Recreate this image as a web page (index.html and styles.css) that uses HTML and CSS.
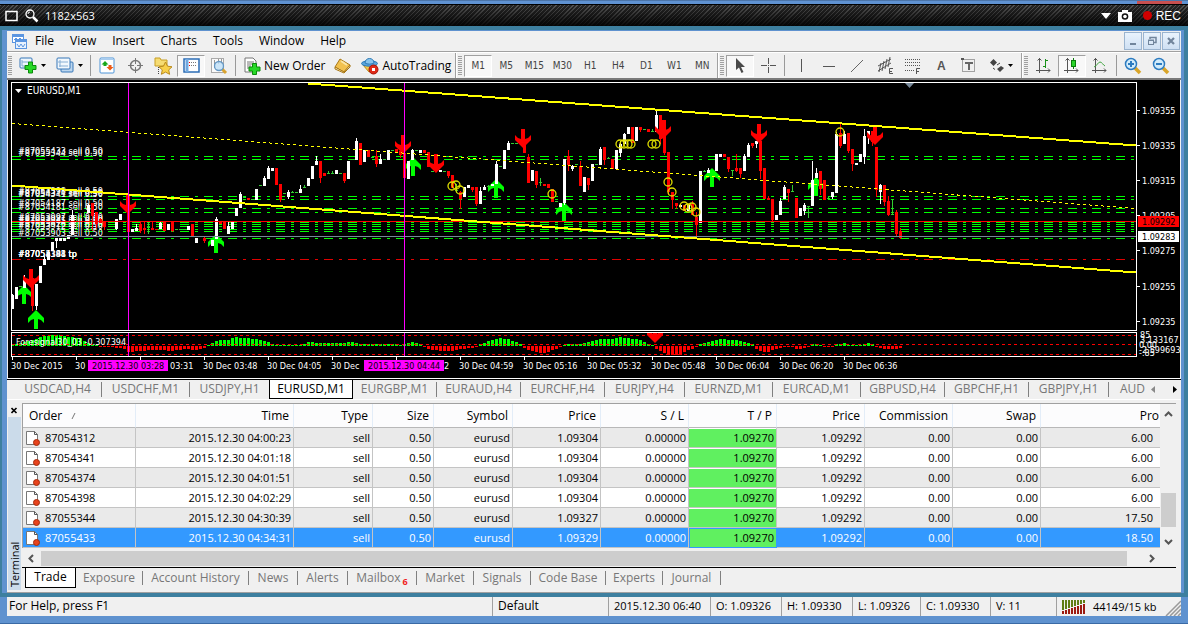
FILE: index.html
```html
<!DOCTYPE html>
<html lang="en">
<head>
    <meta charset="UTF-8">
    <meta name="viewport" content="width=device-width, initial-scale=1.0">
    <title>EURUSD,M1</title>
    <link rel="stylesheet" href="styles.css">
</head>
<body>
    <div class="top-edge"><span class="top-edge-red"></span></div>
    <header class="recorder">
        <svg width="14" height="12" viewBox="0 0 14 12"><rect x="1" y="1.5" width="11" height="9" fill="none" stroke="#fff" stroke-width="1.5"/></svg>
        <svg width="14" height="14" viewBox="0 0 14 14" fill="none" stroke="#fff"><circle cx="5" cy="5" r="4" stroke-width="1.3"/><path d="M3 5a2 2 0 0 1 2-2"/><path d="M8 8l4.500 4.500" stroke-width="2.500"/></svg>
        <span class="recorder-size">1182x563</span>
        <svg width="12" height="8" viewBox="0 0 12 8"><path d="M1 1h10L6 7z" fill="#fff"/></svg>
        <svg width="14" height="12" viewBox="0 0 14 12"><path d="M0 2h4V0h6v2h4v10H0z" fill="#fff"/><circle cx="7" cy="6.500" r="3.300" fill="#111"/><circle cx="7" cy="6.500" r="1.800" fill="#fff"/></svg>
        <span class="rec"><span class="rec-dot"></span>REC</span>
    </header>

    <div class="frame">
        <nav class="menu">
            <svg class="menu-logo" width="15" height="15" viewBox="0 0 15 15"><rect x=".5" y=".5" width="11" height="8" fill="#fff" stroke="#5b95e0"/><path d="M0 2h12" stroke="#5b95e0" stroke-width="2"/><path d="M2 6l2-2 2 2 2-2 2 2" fill="none" stroke="#5b95e0"/><rect x="3.500" y="5.500" width="11" height="9" fill="#e9f2fd" stroke="#5b95e0"/><path d="M3 7h12" stroke="#5b95e0" stroke-width="2"/><path d="M5 10l2 3 2-3 2 3 2-3" fill="none" stroke="#5b95e0"/></svg>
            <a href="#">File</a>
            <a href="#">View</a>
            <a href="#">Insert</a>
            <a href="#">Charts</a>
            <a href="#">Tools</a>
            <a href="#">Window</a>
            <a href="#">Help</a>
            <div class="mdi-buttons">
                <button aria-label="Minimize"><svg width="12" height="12" viewBox="0 0 12 12"><path d="M3 9h6" stroke="#71859c" stroke-width="2"/></svg></button>
                <button aria-label="Restore"><svg width="12" height="12" viewBox="0 0 12 12" fill="none" stroke="#71859c"><path d="M4 4V2.500h6v5H8" stroke-width="1.500"/><rect x="2.500" y="5.500" width="5" height="4"/><path d="M2 5h6"/></svg></button>
                <button aria-label="Close"><svg width="12" height="12" viewBox="0 0 12 12"><path d="M3 3l6 6M9 3L3 9" stroke="#71859c" stroke-width="2.200"/></svg></button>
            </div>
        </nav>

        <div class="toolbar">
            <span class="grip"></span>
            <button class="tool tool-drop" aria-label="New chart"><svg width="18" height="17" viewBox="0 0 18 17"><rect x="1" y="1" width="12" height="10" rx="1" fill="#eef6fc" stroke="#3677b8"/><path d="M3 3v6h7M3 5h7" fill="none" stroke="#7fa9d0"/><path d="M9.500 5h4v3.500H17v4h-3.500V16h-4v-3.500H6v-4h3.500z" fill="#27d827" stroke="#0b8a0b"/></svg><svg width="6" height="4" viewBox="0 0 6 4"><path d="M0 0h5L2.500 3z"/></svg></button>
            <button class="tool tool-drop" aria-label="Profiles"><svg width="18" height="17" viewBox="0 0 18 17"><rect x="5" y="5" width="12" height="10" rx="1" fill="#bcd6ee" stroke="#3677b8"/><rect x="1" y="1" width="13" height="11" rx="1" fill="#f2f8fd" stroke="#3677b8"/><path d="M4 3v7M2 5h10M3 9h9" fill="none" stroke="#88afd4"/></svg><svg width="6" height="4" viewBox="0 0 6 4"><path d="M0 0h5L2.500 3z"/></svg></button>
            <span class="sep"></span>
            <button class="tool" aria-label="Market Watch"><svg width="17" height="17" viewBox="0 0 17 17"><rect x="1" y="1" width="14" height="15" rx="1" fill="#fff" stroke="#4d94d8"/><path d="M2 2h12" stroke="#a9cdef" stroke-width="2"/><path d="M6 4l3.500 3.500H7.500V9h-3V7.500h-2z" fill="#17a717"/><path d="M11 13.500L7.500 10h2V8h3v2h2z" fill="#ee5a16"/></svg></button>
            <button class="tool" aria-label="Data Window"><svg width="17" height="17" viewBox="0 0 17 17" fill="none" stroke="#777"><circle cx="8.500" cy="8.500" r="5" stroke-width="1.500"/><path d="M8.500 1v6M8.500 10v6M1 8.500h6M10 8.500h6"/></svg></button>
            <button class="tool" aria-label="Navigator"><svg width="19" height="18" viewBox="0 0 19 18"><path d="M1 3V1h5l1 2h6v6H1z" fill="#f6dc73" stroke="#c79e24"/><path d="M4.500 10v7" stroke="#444" stroke-dasharray="1 1"/><path d="M11.500 5l2 4.200 4.500.6-3.300 3.100.9 4.400-4.100-2.200-4.100 2.200.9-4.400L5 9.800l4.500-.6z" fill="#f8d04a" stroke="#b98a1c"/></svg></button>
            <button class="tool pressed" aria-label="Terminal"><svg width="17" height="15" viewBox="0 0 17 15"><rect x="1" y="1" width="15" height="13" fill="#fff" stroke="#2b6cb5" stroke-width="1.500"/><path d="M4 1v13" stroke="#70a8e0" stroke-width="3"/><path d="M8 4.500h6M8 7.500h6" stroke="#777" stroke-dasharray="1 1"/><path d="M6 4.500h1" stroke="red"/><path d="M6 7.500h1" stroke="red"/></svg></button>
            <button class="tool" aria-label="Strategy Tester"><svg width="18" height="18" viewBox="0 0 18 18"><rect x="1.500" y="1.500" width="12" height="14" fill="#fafafa" stroke="#aaa"/><path d="M4.500 3v8M8.500 2v5M11.500 2v5" stroke="#999"/><path d="M12 12l4 4" stroke="#d9a32f" stroke-width="3"/><circle cx="9" cy="9" r="4.500" fill="#bfe0f8" fill-opacity=".8" stroke="#6497c4" stroke-width="1.300"/></svg></button>
            <span class="sep"></span>
            <button class="tool-text"><svg width="18" height="18" viewBox="0 0 18 18"><path d="M2 1h8l3 3v11H2z" fill="#fff" stroke="#777"/><path d="M4 5h7M4 7h7M4 9h4M4 11h3" stroke="#777"/><path d="M9.500 6.500h4V10H17v4h-3.500v3.500h-4V14H6v-4h3.500z" fill="#27d827" stroke="#0b8a0b"/></svg>New Order</button>
            <button class="tool" aria-label="MetaEditor"><svg width="17" height="16" viewBox="0 0 17 16"><path d="M6 1l10 6-6 7L1 9z" fill="#f2c14e" stroke="#a87716"/><path d="M1 9v2l9 4 6-6V7l-6 7z" fill="#fff1c0" stroke="#a87716"/><path d="M7 3l6 4" stroke="#fbe6a4" stroke-width="2"/></svg></button>
            <button class="tool-text"><svg width="18" height="18" viewBox="0 0 18 18"><path d="M2 8l6 7 8-2-1-5z" fill="#f5c945" stroke="#b98d20"/><ellipse cx="8.500" cy="6.500" rx="8" ry="2.700" fill="#5aa5dc" stroke="#2c79b5"/><path d="M4 6c0-6 9-6 9 0-2 1.500-7 1.500-9 0z" fill="#88c4ec" stroke="#2c79b5"/><circle cx="12.500" cy="12.500" r="4.500" fill="#e02a18" stroke="#a91305"/><rect x="11" y="11" width="3" height="3" fill="#fff"/></svg>AutoTrading</button>

            <span class="group-end"></span>
            <span class="grip"></span>
            <button class="tool period pressed">M1</button>
            <button class="tool period">M5</button>
            <button class="tool period">M15</button>
            <button class="tool period">M30</button>
            <button class="tool period">H1</button>
            <button class="tool period">H4</button>
            <button class="tool period">D1</button>
            <button class="tool period">W1</button>
            <button class="tool period">MN</button>

            <span class="group-end"></span>
            <span class="grip"></span>
            <button class="tool pressed" aria-label="Cursor"><svg width="10" height="16" viewBox="0 0 10 16"><path d="M1 0v12l3-2.500L6.500 15l2-1L6 9h4z" fill="#4a4a4a"/></svg></button>
            <button class="tool" aria-label="Crosshair"><svg width="15" height="15" viewBox="0 0 15 15"><path d="M7.500 0v6M7.500 9v6M0 7.500h6M9 7.500h6M7 7.500h1" stroke="#555"/></svg></button>
            <span class="sep"></span>
            <button class="tool" aria-label="Vertical line"><svg width="14" height="14" viewBox="0 0 14 14"><path d="M7.500 0v13" stroke="#555"/></svg></button>
            <button class="tool" aria-label="Horizontal line"><svg width="14" height="14" viewBox="0 0 14 14"><path d="M1 7.500h12" stroke="#555"/></svg></button>
            <button class="tool" aria-label="Trendline"><svg width="14" height="14" viewBox="0 0 14 14"><path d="M1 13L13 1" stroke="#666"/></svg></button>
            <button class="tool" aria-label="Equidistant channel"><svg width="17" height="18" viewBox="0 0 17 18" fill="none" stroke="#555"><path d="M1 9L14 2M1 14l13-8M4 6L2 15M7 4L5 14M10 2L8 12M13 0l-2 10"/><path d="M16 11.500h-3.500v5H16M12 14.500h3"/></svg></button>
            <button class="tool" aria-label="Fibonacci"><svg width="16" height="18" viewBox="0 0 16 18" fill="none" stroke="#555"><path d="M0 2.500h15M0 5.500h15M0 8.500h15M0 13.500h9" stroke-dasharray="1 1"/><path d="M15 11.500h-3.500V17M11 14.500h3"/></svg></button>
            <button class="tool letter">A</button>
            <button class="tool" aria-label="Text label"><svg width="16" height="16" viewBox="0 0 16 16"><path d="M1.500 1.500h12v12h-12z" fill="none" stroke="#555" stroke-dasharray="1 1"/><path d="M0 0h3v2H0z" fill="#555"/><path d="M4 5h8M8 4v8" stroke="#666" stroke-width="2"/></svg></button>
            <button class="tool tool-drop" aria-label="Arrows"><svg width="14" height="14" viewBox="0 0 14 14"><path d="M3.500 0L7 3.500 3.500 7 0 3.500zM11 7l3 2-4 4-3-3z" fill="#444"/><path d="M3 9l2 1.500M7 6l3-2" stroke="#444"/></svg><svg width="6" height="4" viewBox="0 0 6 4"><path d="M0 0h5L2.500 3z"/></svg></button>

            <span class="group-end"></span>
            <span class="grip"></span>
            <button class="tool" aria-label="Bar chart"><svg width="16" height="16" viewBox="0 0 16 16" fill="none"><path d="M3.500 0v15M0 12.500h14M1.500 2.500l2-2 2 2M12 10.500l2 2-2 2" stroke="#555"/><path d="M9.500 1v9M9 2.500h3M7 8.500h3" stroke="#189018"/></svg></button>
            <button class="tool pressed" aria-label="Candlesticks"><svg width="16" height="16" viewBox="0 0 16 16" fill="none"><path d="M3.500 0v15M0 12.500h14M1.500 2.500l2-2 2 2M12 10.500l2 2-2 2" stroke="#555"/><path d="M9.500 0v11" stroke="#0b7d0b"/><rect x="7.500" y="2.500" width="4" height="6" fill="#2ad52a" stroke="#0b7d0b"/></svg></button>
            <button class="tool" aria-label="Line chart"><svg width="16" height="16" viewBox="0 0 16 16" fill="none"><path d="M3.500 0v15M0 12.500h14M1.500 2.500l2-2 2 2M12 10.500l2 2-2 2" stroke="#555"/><path d="M2 9c3-1 4-5 6-5s3 3 5 4" stroke="#3fa53f"/></svg></button>
            <span class="sep"></span>
            <button class="tool" aria-label="Zoom in"><svg width="18" height="18" viewBox="0 0 18 18"><path d="M11 11l5 5" stroke="#d9a52a" stroke-width="3.500"/><circle cx="7" cy="7" r="5.500" fill="#d2ecfb" stroke="#2e7cc0" stroke-width="1.500"/><path d="M4 7h6M7 4v6" stroke="#2e7cc0" stroke-width="2"/></svg></button>
            <button class="tool" aria-label="Zoom out"><svg width="18" height="18" viewBox="0 0 18 18"><path d="M11 11l5 5" stroke="#d9a52a" stroke-width="3.500"/><circle cx="7" cy="7" r="5.500" fill="#d2ecfb" stroke="#2e7cc0" stroke-width="1.500"/><path d="M4 7h6" stroke="#2e7cc0" stroke-width="2"/></svg></button>
        </div>

        <main class="chart">
            <svg id="chart" viewBox="8 2 1172 298"></svg>
        </main>

        <nav class="chart-tabs">
            <a href="#">USDCAD,H4</a>
            <a href="#">USDCHF,M1</a>
            <a href="#" class="before-active">USDJPY,H1</a>
            <a href="#" class="active">EURUSD,M1</a>
            <a href="#">EURGBP,M1</a>
            <a href="#">EURAUD,H4</a>
            <a href="#">EURCHF,H4</a>
            <a href="#">EURJPY,H4</a>
            <a href="#">EURNZD,M1</a>
            <a href="#">EURCAD,M1</a>
            <a href="#">GBPUSD,H4</a>
            <a href="#">GBPCHF,H1</a>
            <a href="#">GBPJPY,H1</a>
            <a href="#" class="cut">AUD</a>
            <button aria-label="Previous"><svg width="4" height="8" viewBox="0 0 4 8"><path d="M4 0v7L0 3.500z" fill="#888"/></svg></button>
            <button aria-label="Next"><svg width="4" height="8" viewBox="0 0 4 8"><path d="M0 0v7l4-3.500z"/></svg></button>
        </nav>

        <section class="terminal">
            <div class="terminal-side">
                <button aria-label="Close"><svg width="7" height="7" viewBox="0 0 7 7"><path d="M.5 1l5 5M5.500 1l-5 5" stroke="#000" stroke-width="1.600"/></svg></button>
                <span class="terminal-title">Terminal</span>
            </div>
            <div class="terminal-body">
                <div class="orders">
                    <table>
                        <colgroup>
                            <col class="c-order"><col class="c-time"><col class="c-type"><col class="c-size"><col class="c-type">
                            <col class="c-num"><col class="c-num"><col class="c-num"><col class="c-num"><col class="c-num"><col class="c-num"><col>
                        </colgroup>
                        <thead>
                            <tr><th>Order <svg width="8" height="8" viewBox="0 0 8 8"><path d="M1 7L4 1" stroke="#777"/></svg></th><th>Time</th><th>Type</th><th>Size</th><th>Symbol</th><th>Price</th><th>S / L</th><th>T / P</th><th>Price</th><th>Commission</th><th>Swap</th><th>Pro</th></tr>
                        </thead>
                        <tbody id="orders"></tbody>
                    </table>
                    <div class="v-scroll">
                        <svg width="9" height="6" viewBox="0 0 9 6"><path d="M1 5l3.500-3.500L8 5" fill="none" stroke="#555" stroke-width="2"/></svg>
                        <span class="v-thumb"></span>
                        <svg width="9" height="6" viewBox="0 0 9 6"><path d="M1 1l3.500 3.500L8 1" fill="none" stroke="#555" stroke-width="2"/></svg>
                    </div>
                </div>
                <div class="h-scroll">
                    <svg width="6" height="9" viewBox="0 0 6 9"><path d="M5 1L1.500 4.500 5 8" fill="none" stroke="#555" stroke-width="2"/></svg>
                    <span class="h-thumb"></span>
                    <svg width="6" height="9" viewBox="0 0 6 9"><path d="M1 1l3.500 3.500L1 8" fill="none" stroke="#555" stroke-width="2"/></svg>
                </div>
                <nav class="terminal-tabs">
                    <a href="#" class="active">Trade</a>
                    <a href="#">Exposure</a>
                    <a href="#">Account History</a>
                    <a href="#">News</a>
                    <a href="#">Alerts</a>
                    <a href="#">Mailbox<small>6</small></a>
                    <a href="#">Market</a>
                    <a href="#">Signals</a>
                    <a href="#">Code Base</a>
                    <a href="#">Experts</a>
                    <a href="#">Journal</a>
                </nav>
            </div>
        </section>
    </div>

    <div class="bottom-edge">
        <footer class="status">
            <span>For Help, press F1</span>
            <span>Default</span>
            <span class="num">2015.12.30 06:40</span>
            <span class="num">O: 1.09326</span>
            <span class="num">H: 1.09330</span>
            <span class="num">L: 1.09326</span>
            <span class="num">C: 1.09330</span>
            <span class="num">V: 11</span>
            <span class="num traffic">
                <svg width="24" height="14" viewBox="0 0 24 14"><path d="M1 0v10M4 0v9M7 0v8M10 0v7M13 0v6M16 0v5M19 0v4M22 0v3" stroke="#5f7d13" stroke-width="2"/><path d="M1 11v3M4 10v4M7 9v5M10 8v6M13 7v7M16 6v8M19 5v9M22 4v10" stroke="#9c1a10" stroke-width="2"/></svg>
                44149/15 kb
            </span>
            <svg class="resize" width="16" height="16" viewBox="0 0 16 16"><path d="M1 16L16 1M5 16L16 5M9 16l7-7M13 16l3-3" stroke="#999" stroke-width="1.500"/></svg>
        </footer>
    </div>

    <script src="script.js"></script>
</body>
</html>
```

FILE: styles.css
```css
* {
    box-sizing: border-box;
}
body {
    margin: 0;
    min-height: 100vh;
    background: #3d7f9f;
    font-family: "Open Sans", "Noto Sans", sans-serif;
    font-size: 12px;
    line-height: 16px;
    color: #000;
}
a {
    color: inherit;
    text-decoration: none;
}
button {
    margin: 0;
    padding: 0;
    border: 0;
    background: none;
    font: inherit;
    color: inherit;
}
svg {
    flex: none;
}

/* screen recorder strip */
.top-edge {
    display: flex;
    justify-content: flex-end;
    height: 4px;
    padding-right: 6px;
    background: #5f92d2;
    border-top: 1px solid #4b74a8;
}
.top-edge-red {
    width: 45px;
    background: #c75050;
}
.recorder {
    display: flex;
    align-items: center;
    gap: 6px;
    height: 22px;
    margin-bottom: 4px;
    padding: 0 7px 0 5px;
    border-top: 1px solid #000;
    color: #fff;
    background:
        linear-gradient(rgba(0, 0, 0, 0), rgba(0, 0, 0, 0.9)),
        repeating-linear-gradient(135deg, #555 0, #555 1px, #262626 1px, #262626 3px);
}
.recorder-size {
    flex: 1;
    font-size: 11px;
}
.rec {
    display: flex;
    align-items: center;
    gap: 4px;
    margin-left: 5px;
    font-family: "Liberation Sans", sans-serif;
    font-size: 12px;
}
.rec-dot {
    width: 9px;
    height: 9px;
    border-radius: 50%;
    background: #d00000;
}

/* main window */
.frame {
    margin: 0 4px 4px 2px;
    border: solid #5f92cf;
    border-width: 1px 3px 0 5px;
    background: #f0f0f0;
}
.menu {
    display: flex;
    align-items: center;
    gap: 16px;
    height: 21px;
    padding-left: 5px;
    border-bottom: 1px solid #a0a0a0;
}
.menu-logo {
    margin-right: -8px;
}
.mdi-buttons {
    display: flex;
    gap: 1px;
    margin-left: auto;
    padding-right: 1px;
}
.mdi-buttons button {
    display: flex;
    align-items: center;
    justify-content: center;
    width: 18px;
    height: 18px;
    border: 1px solid #9bb4cf;
    background: linear-gradient(#e9f3fd, #cfe0f3);
}
.toolbar {
    display: flex;
    align-items: center;
    height: 28px;
    border-top: 1px solid #fff;
    border-bottom: 2px solid #7a7a7a;
}
.grip {
    width: 4px;
    height: 19px;
    margin: 0 2px 0 1px;
    background: repeating-linear-gradient(#a0a0a0 0, #a0a0a0 1px, #f0f0f0 1px, #f0f0f0 2px);
}
.tool {
    display: flex;
    align-items: center;
    justify-content: center;
    width: 28px;
    height: 22px;
}
.tool-drop {
    gap: 4px;
    width: 37px;
}
.tool-text {
    display: flex;
    align-items: center;
    gap: 3px;
    padding: 0 3px 0 5px;
    white-space: nowrap;
}
.pressed {
    border: 1px solid #fff;
    border-top-color: #a0a0a0;
    border-left-color: #a0a0a0;
    background: #f8f8f8;
}
.sep {
    width: 1px;
    height: 21px;
    margin: 0 2px;
    background: #999;
}
.group-end {
    width: 2px;
    height: 25px;
    margin-left: 1px;
    border-left: 1px solid #a0a0a0;
    background: #fff;
}
.period {
    font-family: "DejaVu Sans Condensed", "DejaVu Sans", sans-serif;
    font-size: 10px;
    color: #444;
}
.letter {
    font-family: "Liberation Sans", sans-serif;
    font-weight: bold;
    color: #555;
}

/* chart */
.chart {
    margin: 0 1px;
    background: #000;
    border-bottom: 1px solid #fff;
}
.chart svg {
    display: block;
    width: 100%;
    font-family: "DejaVu Sans Condensed", "DejaVu Sans", sans-serif;
    font-size: 9px;
}
.chart-tabs {
    display: grid;
    grid-template-columns: 88px 88px 79px 84px 84px 84px 84px 80px 88px 88px 84px 84px 80px 1fr 16px 28px;
    height: 20px;
    padding-left: 7px;
    border-top: 1px solid #000;
    color: #777;
}
.chart-tabs a {
    align-self: center;
    height: 15px;
    line-height: 13px;
    border-right: 1px solid #808080;
    text-align: center;
}
.chart-tabs .active,
.terminal-tabs .active {
    align-self: stretch;
    height: auto;
    border: 1px solid #000;
    border-top: 0;
    line-height: 17px;
    background: #fff;
    color: #000;
}
.chart-tabs .before-active {
    border-right: 0;
}
.chart-tabs .cut {
    border-right: 0;
    padding-left: 11px;
    text-align: left;
}

/* terminal */
.terminal {
    display: flex;
    height: 194px;
    border-top: 1px solid #fff;
    border-bottom: 1px solid #a0a0a0;
}
.terminal-side {
    display: flex;
    flex-direction: column;
    width: 15px;
    padding: 3px 1px 2px;
}
.terminal-side button {
    height: 14px;
    line-height: 8px;
}
.terminal-title {
    flex: 1;
    writing-mode: vertical-rl;
    transform: rotate(180deg);
    padding-top: 3px;
    line-height: 13px;
    font-size: 11px;
    background: #cbdbea;
}
.terminal-body {
    flex: 1;
    min-width: 0;
    padding: 3px 5px 0 0;
}
.orders {
    display: flex;
    border-top: 1px solid #a0a0a0;
    border-left: 1px solid #a0a0a0;
}
table {
    flex: 1;
    min-width: 0;
    table-layout: fixed;
    border-collapse: separate;
    border-spacing: 0;
    font-size: 11px;
}
.c-order { width: 113px; }
.c-time { width: 158px; }
.c-type { width: 79px; }
.c-size { width: 61px; }
.c-num { width: 88px; }
th {
    height: 24px;
    padding: 0 4px 0 6px;
    border-right: 1px solid #e3edf8;
    border-bottom: 1px solid #b8b8b8;
    background: #fcfcfd;
    font-size: 12px;
    font-weight: normal;
    text-align: right;
    white-space: nowrap;
}
th:first-child,
td:first-child {
    text-align: left;
}
th:first-child svg {
    margin-left: 6px;
}
th:last-child {
    padding-right: 1px;
    border-right: 0;
}
td {
    height: 20px;
    padding: 0 2px 0 3px;
    border-right: 1px solid #c4c4c4;
    border-bottom: 1px solid #c4c4c4;
    background: #fff;
    line-height: 17px;
    text-align: right;
    white-space: nowrap;
}
td:last-child {
    padding-right: 7px;
    border-right: 0;
}
td svg {
    margin-right: 5px;
    vertical-align: middle;
}
tr:nth-child(odd) td {
    background: #eaeaea;
}
tr.selected td {
    background: #3399ff;
    color: #fff;
}
tr td.tp,
tr:nth-child(odd) td.tp {
    background: #60f060;
    box-shadow: inset 0 1px #fff;
    color: #000;
}
tr.selected td.tp {
    border-color: #3399ff;
    background: #60f060;
    box-shadow: inset 1px 1px #3399ff;
}
.v-scroll {
    display: flex;
    flex-direction: column;
    align-items: center;
    width: 16px;
    padding: 7px 0 3px;
}
.v-thumb {
    width: 15px;
    height: 34px;
    margin-top: auto;
    margin-bottom: 12px;
    background: #cdcdcd;
}
.h-scroll {
    display: flex;
    align-items: center;
    height: 19px;
    padding: 2px 21px 1px 6px;
}
.h-thumb {
    flex: 1;
    height: 15px;
    margin: 0 22px 0 7px;
    background: #cdcdcd;
}
.terminal-tabs {
    display: grid;
    grid-template-columns: 51px 67px 106px 49px 50px 69px 57px 57px 75px 57px 58px;
    height: 21px;
    padding-left: 3px;
    border-top: 1px solid #000;
    color: #777;
}
.terminal-tabs a {
    align-self: center;
    height: 14px;
    line-height: 13px;
    border-right: 1px solid #808080;
    text-align: center;
    white-space: nowrap;
}
.terminal-tabs small {
    margin-left: 2px;
    font-size: 9px;
    font-weight: bold;
    vertical-align: sub;
    line-height: 1;
    color: #f02020;
}

/* status bar */
.bottom-edge {
    padding: 0 7px 7px;
    background: #5f92cf;
    border-bottom: 1px solid #3a6aa5;
}
.status {
    display: grid;
    grid-template-columns: 1fr 116px 102px 71px 71px 68px 70px 66px 109px 16px;
    height: 19px;
    background: #f0f0f0;
    line-height: 18px;
}
.status span {
    padding-left: 5px;
    border-left: 1px solid #a0a0a0;
    white-space: nowrap;
}
.status span:first-child {
    padding-left: 2px;
    border-left: 0;
}
.status .num {
    font-size: 11px;
}
.traffic {
    display: flex;
    align-items: center;
    gap: 7px;
}
.resize {
    align-self: end;
}
```

FILE: script.js
```js
const NS = 'http://www.w3.org/2000/svg';
const svg = document.getElementById('chart');

// Adds an element to the chart
function add(name, attrs, text) {
    const el = document.createElementNS(NS, name);
    for (const key in attrs) {
        el.setAttribute(key, attrs[key]);
    }
    if (text) {
        el.textContent = text;
    }
    svg.appendChild(el);
}
function rect(x, y, width, height, fill) {
    add('rect', {x, y, width, height, fill, 'shape-rendering': 'crispEdges'});
}
function line(x1, y1, x2, y2, stroke, width, dash) {
    add('line', {x1, y1, x2, y2, stroke, 'stroke-width': width || 1, 'stroke-dasharray': dash || 'none', 'shape-rendering': 'crispEdges'});
}
function label(x, y, text, fill, size) {
    add('text', {x, y, fill: fill || '#fff', 'font-size': size || 9}, text);
}

const LEFT = 12;
const RIGHT = 1136;

// Price levels of the open orders
[78, 81, 118, 121, 130, 134, 144, 146, 148, 151, 153, 160].forEach(y => {
    line(LEFT, y + 0.5, RIGHT, y + 0.5, '#00ff00', 1, '9 6 3 6');
});
line(LEFT, 181.5, RIGHT, 181.5, '#e00000', 1, '9 6 3 6');

// Order captions, they overlap where the levels are close
[
    [76, '#87055433 sell 0.50'], [78, '#87055344 sell 0.50'],
    [116, '#87054398 sell 0.50'], [118, '#87054374 sell 0.50'], [119, '#87054341 sell 0.50'],
    [128, '#87054187 sell 0.50'], [132, '#87054181 sell 0.50'],
    [142, '#87053997 sell 0.10'], [144, '#87053981 sell 0.50'], [146, '#87053945 sell 0.50'],
    [149, '#87053926 sell 0.50'], [151, '#87053912 sell 0.50'], [158, '#87053903 sell 0.50'],
    [179, '#87054398 tp'], [179, '#87055344 tp'], [179, '#87054181 tp']
].forEach(([y, text]) => label(18, y, text));

// Candles: x, high, top, bottom, low, color
const candles = [
    [12, 216, 217, 231, 231, 'w'], [16, 209, 209, 221, 221, 'w'], [20, 208, 208, 209, 209, 'g'], [24, 197, 201, 210, 210, 'w'],
    [32, 200, 200, 228, 233, 'r'], [36, 206, 206, 228, 232, 'w'], [40, 188, 188, 205, 205, 'w'], [44, 178, 181, 187, 187, 'w'],
    [48, 174, 174, 182, 182, 'w'], [52, 164, 164, 173, 173, 'w'], [56, 160, 160, 163, 170, 'w'], [60, 160, 160, 163, 163, 'w'],
    [64, 160, 160, 163, 163, 'w'], [68, 157, 157, 161, 161, 'w'], [72, 132, 137, 157, 157, 'w'], [76, 137, 145, 146, 150, 'g'],
    [80, 137, 139, 140, 140, 'g'], [84, 135, 138, 139, 140, 'g'], [88, 126, 127, 135, 135, 'w'], [92, 125, 125, 138, 153, 'r'],
    [96, 134, 134, 146, 150, 'r'], [100, 140, 141, 145, 145, 'r'], [104, 143, 143, 149, 152, 'r'], [108, 151, 151, 152, 152, 'g'],
    [112, 151, 151, 152, 152, 'g'], [116, 141, 141, 151, 152, 'w'], [120, 136, 136, 142, 142, 'w'], [128, 117, 117, 154, 154, 'r'],
    [132, 151, 151, 154, 154, 'w'], [136, 146, 150, 153, 153, 'w'], [140, 144, 146, 153, 155, 'r'], [144, 144, 150, 152, 156, 'r'],
    [148, 144, 149, 150, 156, 'g'], [152, 143, 150, 152, 152, 'r'], [156, 151, 151, 152, 152, 'r'], [160, 144, 145, 151, 151, 'w'],
    [164, 144, 144, 153, 153, 'r'], [168, 146, 146, 152, 152, 'w'], [172, 144, 144, 153, 154, 'r'], [176, 151, 151, 152, 152, 'g'],
    [180, 151, 151, 152, 152, 'g'], [184, 151, 151, 152, 152, 'g'], [188, 148, 148, 152, 152, 'w'], [192, 146, 146, 159, 159, 'r'],
    [196, 160, 160, 165, 165, 'w'], [204, 158, 160, 163, 165, 'r'], [212, 162, 162, 168, 168, 'w'], [216, 139, 141, 161, 161, 'w'],
    [220, 144, 144, 146, 146, 'r'], [224, 143, 143, 151, 151, 'r'], [228, 144, 148, 156, 156, 'w'], [232, 143, 143, 151, 151, 'w'],
    [236, 130, 130, 138, 138, 'w'], [240, 114, 116, 130, 130, 'w'], [244, 119, 119, 120, 120, 'g'], [248, 120, 120, 122, 122, 'r'],
    [252, 121, 121, 122, 122, 'g'], [256, 111, 111, 122, 122, 'w'], [260, 107, 107, 108, 108, 'g'], [264, 98, 100, 108, 108, 'w'],
    [268, 88, 90, 101, 101, 'w'], [272, 90, 90, 93, 93, 'w'], [276, 90, 90, 107, 107, 'r'], [280, 106, 106, 122, 124, 'r'],
    [284, 115, 115, 116, 116, 'g'], [288, 112, 114, 119, 121, 'w'], [292, 113, 114, 115, 115, 'g'], [296, 114, 114, 115, 115, 'g'],
    [300, 107, 111, 115, 115, 'w'], [304, 107, 109, 110, 110, 'g'], [308, 100, 100, 108, 108, 'w'], [312, 88, 88, 101, 101, 'w'],
    [316, 78, 83, 87, 87, 'w'], [320, 83, 83, 100, 105, 'r'], [324, 95, 95, 98, 98, 'r'], [328, 93, 95, 96, 96, 'g'],
    [332, 93, 95, 96, 96, 'g'], [336, 92, 92, 96, 96, 'w'], [340, 95, 95, 96, 96, 'g'], [344, 95, 95, 103, 105, 'r'],
    [348, 83, 83, 101, 101, 'w'], [352, 81, 81, 82, 82, 'g'], [356, 60, 63, 82, 82, 'w'], [360, 65, 65, 87, 87, 'r'],
    [364, 72, 72, 84, 84, 'w'], [368, 72, 72, 79, 79, 'r'], [372, 79, 79, 80, 80, 'g'], [376, 72, 78, 86, 89, 'r'],
    [380, 76, 81, 86, 86, 'w'], [384, 81, 81, 82, 82, 'g'], [388, 72, 72, 82, 82, 'w'], [392, 72, 72, 73, 73, 'g'],
    [396, 71, 71, 75, 75, 'r'], [400, 72, 73, 77, 80, 'r'], [404, 75, 75, 100, 105, 'r'], [408, 83, 83, 101, 101, 'w'],
    [412, 71, 72, 82, 82, 'w'], [416, 72, 72, 73, 73, 'g'], [420, 72, 72, 75, 75, 'w'], [424, 72, 72, 75, 75, 'r'],
    [428, 74, 74, 89, 89, 'r'], [432, 93, 93, 94, 94, 'g'], [440, 92, 92, 94, 94, 'w'], [444, 93, 93, 94, 94, 'g'],
    [448, 93, 93, 98, 100, 'r'], [452, 97, 97, 110, 110, 'r'], [456, 106, 112, 113, 115, 'g'], [460, 113, 114, 121, 131, 'r'],
    [464, 109, 109, 119, 119, 'w'], [468, 107, 107, 110, 110, 'w'], [472, 109, 109, 112, 114, 'r'], [476, 109, 109, 126, 128, 'r'],
    [480, 109, 113, 126, 126, 'w'], [484, 107, 109, 112, 112, 'w'], [488, 107, 108, 109, 109, 'g'], [492, 106, 106, 108, 108, 'w'],
    [496, 83, 86, 106, 106, 'w'], [500, 88, 88, 89, 89, 'g'], [504, 72, 72, 91, 91, 'w'], [508, 63, 65, 72, 72, 'w'],
    [512, 65, 65, 66, 66, 'g'], [516, 65, 65, 66, 66, 'g'], [524, 63, 63, 75, 75, 'r'], [528, 76, 79, 105, 105, 'r'],
    [532, 92, 92, 103, 103, 'w'], [536, 93, 93, 107, 110, 'r'], [540, 100, 104, 105, 108, 'g'], [544, 106, 106, 108, 108, 'r'],
    [548, 106, 106, 110, 110, 'r'], [552, 111, 111, 124, 124, 'r'], [556, 123, 123, 124, 124, 'g'], [560, 125, 125, 129, 129, 'w'],
    [564, 81, 81, 125, 127, 'w'], [568, 72, 78, 87, 93, 'r'], [572, 87, 88, 91, 93, 'w'], [576, 86, 86, 87, 87, 'g'],
    [580, 83, 88, 108, 108, 'r'], [584, 99, 99, 114, 114, 'w'], [588, 100, 100, 107, 112, 'r'], [592, 86, 86, 103, 103, 'w'],
    [596, 86, 86, 87, 87, 'g'], [600, 69, 71, 87, 87, 'w'], [604, 69, 69, 82, 87, 'r'], [608, 79, 80, 81, 81, 'g'],
    [612, 81, 81, 91, 91, 'r'], [616, 72, 72, 91, 91, 'w'], [620, 63, 66, 75, 79, 'w'], [624, 55, 56, 66, 66, 'w'],
    [628, 49, 49, 56, 56, 'w'], [632, 49, 49, 65, 65, 'r'], [636, 49, 49, 63, 63, 'w'], [640, 49, 49, 52, 54, 'r'],
    [644, 51, 51, 52, 52, 'g'], [648, 51, 51, 54, 54, 'r'], [652, 51, 53, 54, 54, 'g'], [656, 32, 37, 54, 54, 'w'],
    [660, 37, 37, 61, 66, 'r'], [664, 42, 42, 75, 77, 'r'], [668, 74, 74, 114, 117, 'r'], [672, 114, 114, 122, 131, 'r'],
    [676, 125, 125, 128, 131, 'r'], [680, 126, 127, 129, 129, 'w'], [684, 127, 127, 133, 133, 'r'], [688, 126, 127, 133, 133, 'w'],
    [692, 123, 126, 137, 137, 'r'], [696, 134, 139, 147, 161, 'r'], [700, 93, 93, 145, 145, 'w'], [704, 92, 93, 94, 94, 'g'],
    [708, 90, 92, 95, 95, 'w'], [716, 76, 76, 93, 93, 'w'], [720, 76, 76, 79, 79, 'w'], [724, 76, 76, 79, 79, 'r'],
    [728, 79, 79, 91, 94, 'r'], [732, 92, 92, 93, 98, 'g'], [736, 76, 90, 93, 94, 'r'], [740, 90, 90, 96, 100, 'r'],
    [744, 76, 78, 93, 93, 'w'], [748, 65, 67, 79, 79, 'w'], [752, 65, 65, 68, 70, 'r'], [756, 63, 63, 66, 70, 'w'],
    [760, 63, 63, 93, 101, 'r'], [764, 90, 90, 121, 121, 'r'], [768, 118, 120, 122, 122, 'r'], [772, 121, 121, 142, 144, 'r'],
    [776, 137, 137, 142, 142, 'w'], [780, 120, 123, 137, 137, 'w'], [784, 107, 109, 121, 121, 'w'], [788, 111, 111, 115, 124, 'r'],
    [792, 107, 113, 114, 114, 'g'], [796, 120, 120, 140, 140, 'r'], [800, 130, 130, 138, 138, 'w'], [804, 125, 127, 133, 137, 'w'],
    [808, 128, 128, 129, 140, 'g'], [812, 83, 102, 128, 128, 'w'], [816, 90, 95, 100, 100, 'w'], [820, 93, 93, 111, 117, 'r'],
    [824, 102, 102, 122, 122, 'r'], [828, 119, 120, 121, 121, 'g'], [832, 114, 114, 119, 121, 'w'], [836, 54, 56, 115, 115, 'w'],
    [840, 46, 55, 68, 70, 'r'], [844, 53, 56, 66, 66, 'w'], [848, 55, 55, 73, 75, 'r'], [852, 71, 71, 86, 93, 'r'],
    [856, 85, 85, 87, 87, 'w'], [860, 76, 76, 84, 84, 'w'], [864, 51, 58, 79, 86, 'w'], [868, 53, 53, 57, 66, 'w'],
    [872, 53, 53, 64, 68, 'r'], [876, 69, 69, 112, 119, 'r'], [880, 106, 107, 114, 126, 'w'], [884, 107, 107, 124, 128, 'r'],
    [888, 118, 123, 137, 138, 'r'], [892, 121, 136, 137, 137, 'g'], [896, 132, 134, 156, 159, 'r'], [900, 150, 153, 160, 161, 'r']
];
const colors = {w: '#fff', r: '#ff0000', g: '#32cd32'};

// Signal arrows under the candles: x, y of the topmost point
[[24, 207], [36, 232], [216, 156], [413, 79], [496, 101], [564, 124], [712, 90], [816, 99]].forEach(([x, y]) => {
    add('path', {d: `M${x} ${y}l8 8v5l-3-3-3-1v10h-4v-10l-3 1-3 3v-5z`, fill: '#00ff00'});
});
candles.forEach(([x, high, top, bottom, low, c]) => {
    rect(x, high, 1, low - high, colors[c]);
    rect(x - 1, top, 3, bottom - top, colors[c]);
});
[[31, 191], [128, 117], [403, 57], [436, 76], [523, 51], [663, 42], [759, 46], [875, 48]].forEach(([x, y]) => {
    add('path', {d: `M${x} ${y + 19}l8-8v-5l-3 3-3 1v-10h-4v10l-3-1-3-3v5z`, fill: '#ff0000'});
});

// Ask and bid
line(LEFT, 143.5, RIGHT, 143.5, '#ff0000');
line(LEFT, 158.5, RIGHT, 158.5, '#778899');

// Circles of the closed trades
[
    [452, 108], [456, 107], [460, 112], [552, 116], [620, 66], [624, 66], [628, 66], [631, 66], [652, 66], [656, 66],
    [668, 104], [672, 114], [684, 128], [688, 130], [692, 129], [696, 134], [840, 54]
].forEach(([cx, cy]) => {
    add('circle', {cx, cy, r: 4, fill: 'none', stroke: '#e0e000', 'stroke-width': 1.3});
});

// Channel
line(308, 5.5, RIGHT, 67.5, '#ffff00', 2);
line(LEFT, 45.5, RIGHT, 130.5, '#ffff00', 1, '3 3');
line(LEFT, 107.5, RIGHT, 194.5, '#ffff00', 2);

// Indicator histogram, one value per bar
const bars = [
    2, 2, 3, 4, 5, 6, 7, 9, 10, 10, 11, 11, 11, 10, 9, 9, 8, 8, 5, 3, 2, 1, -1, -1, -1, -1, -2, -2, -3, -6,
    -6, -5, -5, -5, -4, -4, -4, -4, -4, -5, -5, -4, -4, -3, -3, -4, -4, -3, -2, 1, 3, 5, 6, 6, 6, 8, 9, 8, 8, 8,
    7, 7, 6, 5, 4, 2, 1, 1, 1, 1, 1, 1, 1, 2, 4, 4, 3, 3, 3, 3, 3, 3, 3, 3, 4, 4, 3, 2, 2, 2,
    2, 2, 2, 2, 2, 2, 2, 1, 2, 3, 4, 3, 2, -1, -3, -4, -4, -5, -5, -5, -5, -4, -3, -3, -2, -2, -1, 2, 3, 5,
    6, 7, 8, 7, 7, 5, 4, 2, -2, -4, -5, -6, -7, -7, -6, -4, -3, -1, 1, 2, 2, 2, 2, 3, 4, 5, 6, 7, 7, 7,
    7, 8, 9, 8, 8, 7, 7, 6, 4, 2, 1, -3, -5, -7, -9, -9, -9, -9, -6, -4, -3, -1, 2, 3, 4, 5, 6, 7, 7, 6,
    6, 6, 5, 4, 3, 2, -3, -5, -6, -6, -4, -3, -2, -1, -1, -1, -3, -3, -2, -1, 2, 2, 1, -1, -1, -1, 2, 2, 3, 1,
    1, 1, 1, 2, 3, 2, -1, -2, -3, -3, -3, -3, -2
];
bars.forEach((v, i) => {
    const x = LEFT + i * 4 - 1;
    if (v > 0) {
        rect(x, 268 - v, 3, v, '#00ff00');
    } else {
        rect(x, 268, 3, -v, '#ff0000');
    }
});
[257, 266, 276].forEach(y => line(LEFT, y + 0.5, 1140, y + 0.5, '#ff0000', 1, '3 3'));
// This arrow is cut by the top of the indicator window
add('path', {d: 'M655 265l8-8v-2h-5l-1 1v-1h-4v1l-1-1h-5v2z', fill: '#ff0000'});

// Vertical marks
[128, 404].forEach(x => {
    rect(x, 5, 1, 247, '#ff00ff');
    rect(x, 255, 1, 23, '#ff00ff');
});

// Frames of both windows
[[4, 248], [254, 24]].forEach(([y, h]) => {
    add('rect', {x: 11.5, y: y + 0.5, width: 1125, height: h, fill: 'none', stroke: '#fff', 'shape-rendering': 'crispEdges'});
});
add('path', {d: 'M15 11h7l-3.500 4z', fill: '#fff'});
label(27, 16, 'EURUSD,M1', '#fff', 10);
add('path', {d: 'M905 5h9l-4.500 5z', fill: '#778899'});
label(16, 267, 'Foresignal30_03 -0.307394');

// Price scale
[['1.09355', 32], ['1.09335', 67], ['1.09315', 102], ['1.09295', 137], ['1.09275', 172], ['1.09255', 208], ['1.09235', 243]].forEach(([text, y]) => {
    rect(1137, y, 3, 1, '#fff');
    label(1142, y + 4, text);
});
rect(1138, 138, 41, 11, '#ff0000');
label(1142, 147, '1.09292', '#000');
rect(1138, 153, 41, 11, '#fff');
label(1142, 162, '1.09283', '#000');
label(1140, 260, '85');
label(1140, 265, '3.133167');
label(1139, 270, '0.00');
label(1139, 275, '-2.599693');
label(1139, 278, '-.85');

// Time scale
for (let x = 12; x < 900; x += 64) {
    rect(x, 279, 1, 3, '#fff');
}
[
    [11, '30 Dec 2015'], [75, '30'], [170, '03:31'], [203, '30 Dec 03:48'], [267, '30 Dec 04:05'], [331, '30 Dec'], [444, '2'],
    [459, '30 Dec 04:59'], [523, '30 Dec 05:16'], [587, '30 Dec 05:32'], [651, '30 Dec 05:48'], [715, '30 Dec 06:04'],
    [779, '30 Dec 06:20'], [843, '30 Dec 06:36']
].forEach(([x, text]) => label(x, 291, text));
[[88, '2015.12.30 03:28'], [364, '2015.12.30 04:44']].forEach(([x, text]) => {
    rect(x, 282, 80, 11, '#ff00ff');
    label(x + 4, 291, text, '#000');
});

// Orders table
const orders = [
    ['87054312', '04:00:23', '1.09304', '6.00'],
    ['87054341', '04:01:18', '1.09304', '6.00'],
    ['87054374', '04:01:51', '1.09304', '6.00'],
    ['87054398', '04:02:29', '1.09304', '6.00'],
    ['87055344', '04:30:39', '1.09327', '17.50'],
    ['87055433', '04:34:31', '1.09329', '18.50']
];
const icon = '<svg width="14" height="15" viewBox="0 0 14 15"><path d="M.5.5h8l3 3v10H.5z" fill="#fff" stroke="#777"/><path d="M8.500.5v3h3" fill="none" stroke="#555"/><circle cx="10.500" cy="11.500" r="3" fill="#e8431c" stroke="#a32c0c"/></svg>';
document.getElementById('orders').innerHTML = orders.map(([id, time, price, profit], i) => `
    <tr class="${i === orders.length - 1 ? 'selected' : ''}">
        <td>${icon}${id}</td><td>2015.12.30 ${time}</td><td>sell</td><td>0.50</td><td>eurusd</td><td>${price}</td>
        <td>0.00000</td><td class="tp">1.09270</td><td>1.09292</td><td>0.00</td><td>0.00</td><td>${profit}</td>
    </tr>`).join('');
```
